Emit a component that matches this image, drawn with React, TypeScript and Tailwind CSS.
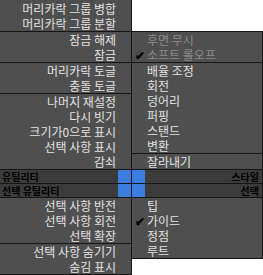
import React from "react";

const LINE = "h-px bg-[#151515]";

function LItem({ t }: { t: string }) {
  return (
    <div className="h-[15px] flex items-center justify-end pr-[15px] text-[12px] leading-[15px] text-[#e2e2e2] whitespace-nowrap">
      {t}
    </div>
  );
}

function RItem({ t, check, disabled }: { t: string; check?: boolean; disabled?: boolean }) {
  return (
    <div className="h-[15px] flex items-center text-[12px] leading-[15px] whitespace-nowrap">
      <span className="w-[15px] flex justify-center text-[12px] font-bold text-black">{check ? "✔" : ""}</span>
      <span className={disabled ? "text-[#8a8a8a]" : "text-[#e2e2e2]"}>{t}</span>
    </div>
  );
}

function Line() {
  return <div className={LINE} />;
}

export default function App() {
  return (
    <div
      className="w-[263px] h-[275px] bg-white flex"
      style={{ fontFamily: '"Noto Sans CJK KR", "Noto Sans", sans-serif' }}
    >
      {/* left column */}
      <div className="w-[132px] flex flex-col border-r border-[#151515] bg-[#4f4f4f]">
        <div className="pt-[1px]">
          <LItem t="머리카락 그룹 병합" />
          <LItem t="머리카락 그룹 분할" />
        </div>
        <Line />
        <LItem t="잠금 해제" />
        <LItem t="잠금" />
        <Line />
        <LItem t="머리카락 토글" />
        <LItem t="충돌 토글" />
        <Line />
        <LItem t="나머지 재설정" />
        <LItem t="다시 빗기" />
        <LItem t="크기가0으로 표시" />
        <LItem t="선택 사항 표시" />
        <LItem t="감쇠" />
        <Line />
        <div className="h-[13px] flex bg-[#3b3b3b]">
          <span className="flex-1 pl-[2px] text-[10px] leading-[13px] font-bold text-black">유틸리티</span>
          <div className="w-[13px] bg-[#3c7ee0]" />
        </div>
        <Line />
        <div className="h-[13px] flex bg-[#3b3b3b]">
          <span className="flex-1 pl-[2px] text-[10px] leading-[13px] font-bold text-black">선택 유틸리티</span>
          <div className="w-[13px] bg-[#3c7ee0]" />
        </div>
        <Line />
        <LItem t="선택 사항 반전" />
        <LItem t="선택 사항 회전" />
        <LItem t="선택 확장" />
        <Line />
        <LItem t="선택 사항 숨기기" />
        <LItem t="숨김 표시" />
        <Line />
      </div>

      {/* right column */}
      <div className="w-[131px] flex flex-col">
        <div className="h-[31px]" />
        <div className="flex flex-col border-r border-[#151515] bg-[#4f4f4f]">
          <Line />
          <RItem t="후면 무시" disabled />
          <RItem t="소프트 롤오프" check disabled />
          <Line />
          <RItem t="배율 조정" />
          <RItem t="회전" />
          <RItem t="덩어리" />
          <RItem t="퍼핑" />
          <RItem t="스탠드" />
          <RItem t="변환" />
          <Line />
          <RItem t="잘라내기" />
          <Line />
          <div className="h-[13px] flex bg-[#3b3b3b]">
            <div className="w-[13px] bg-[#3c7ee0]" />
            <span className="flex-1 pr-[3px] text-right text-[10px] leading-[13px] font-bold text-black">스타일</span>
          </div>
          <Line />
          <div className="h-[13px] flex bg-[#3b3b3b]">
            <div className="w-[13px] bg-[#3c7ee0]" />
            <span className="flex-1 pr-[3px] text-right text-[10px] leading-[13px] font-bold text-black">선택</span>
          </div>
          <Line />
          <RItem t="팁" />
          <RItem t="가이드" check />
          <RItem t="정점" />
          <RItem t="루트" />
          <Line />
        </div>
      </div>
    </div>
  );
}
